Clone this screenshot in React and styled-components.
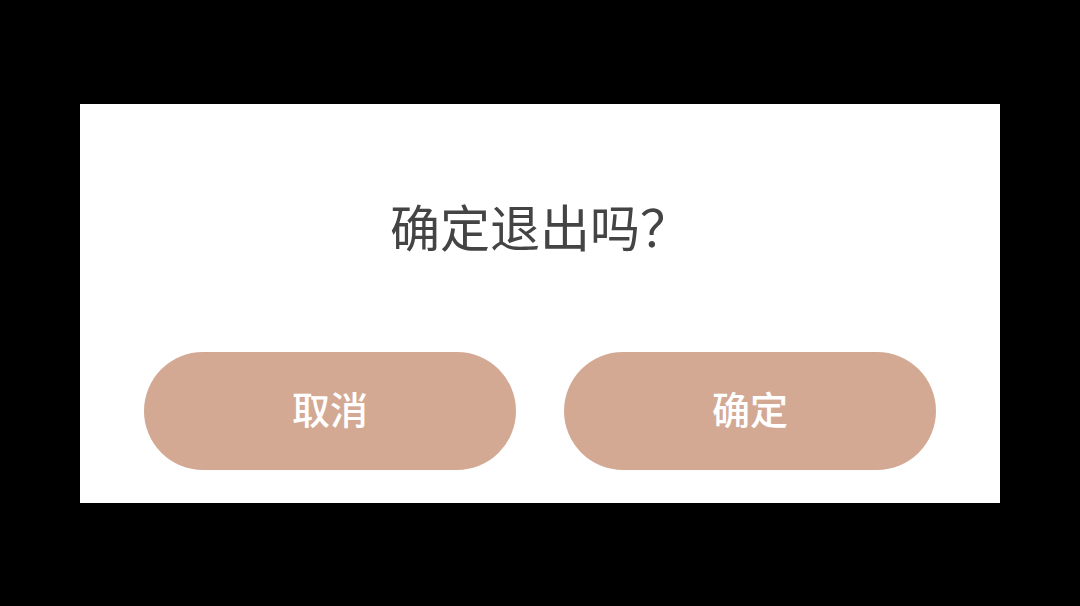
import React from "react";
import styled, { createGlobalStyle } from "styled-components";

const GlobalStyle = createGlobalStyle`
  html, body {
    margin: 0;
    padding: 0;
    background: #000;
  }
  body {
    font-family: "Noto Sans CJK SC", "Noto Sans", sans-serif;
  }
`;

const Screen = styled.div`
  width: 100%;
  height: 100vh;
  display: flex;
  align-items: center;
  justify-content: center;
  background: #000;
`;

const Dialog = styled.div`
  width: 920px;
  box-sizing: border-box;
  background: #fff;
  padding: 0 64px 33px;
  display: flex;
  flex-direction: column;
`;

const Title = styled.div`
  height: 248px;
  display: flex;
  align-items: center;
  justify-content: center;
  padding-bottom: 6px;
  box-sizing: border-box;
  font-size: 50px;
  line-height: 1;
  color: #444;
`;

const Actions = styled.div`
  display: flex;
  gap: 48px;
`;

const Button = styled.button`
  flex: 1;
  height: 118px;
  padding: 0 0 6px;
  border: none;
  border-radius: 59px;
  background: #d3a994;
  color: #fff;
  font-family: "Noto Sans CJK SC", "Noto Sans", sans-serif;
  font-size: 38px;
  font-weight: 500;
  cursor: pointer;
`;

export default function App() {
  return (
    <>
      <GlobalStyle />
      <Screen>
        <Dialog>
          <Title>确定退出吗？</Title>
          <Actions>
            <Button>取消</Button>
            <Button>确定</Button>
          </Actions>
        </Dialog>
      </Screen>
    </>
  );
}
